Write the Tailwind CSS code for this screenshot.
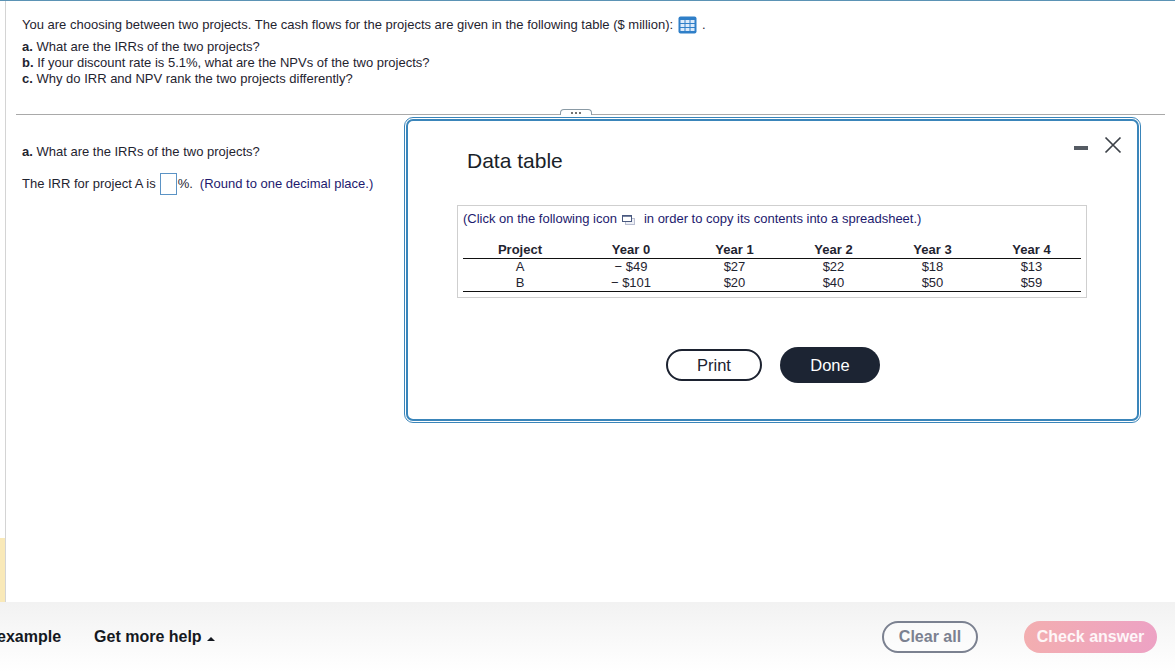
<!DOCTYPE html>
<html lang="en">
<head>
  <meta charset="utf-8" />
  <title>Data table</title>
  <script src="https://cdn.jsdelivr.net/npm/@tailwindcss/browser@4"></script>
</head>
<body class="bg-white">
  <div class="relative flex flex-col w-[1175px] h-[672px] overflow-hidden font-['Liberation_Sans',Arial,sans-serif] text-[13px] text-[#1f2430]">
    <!-- question area -->
    <main class="flex h-[602px] border-t border-t-[#5b93b5]">
      <div class="flex flex-col justify-end w-[6px] h-full border-r border-[#d4d4d4]">
        <div class="h-[64px] bg-[#f9e9b8]"></div>
      </div>
      <div class="flex-1 pl-[10px] pr-[10px]">
        <div class="pl-[6px] pt-[14px] h-[114px] border-b border-[#a9a9a9] relative">
          <p class="flex items-center h-[20px] leading-[20px]">
            You are choosing between two projects. The cash flows for the projects are given in the following table ($ million):
            <svg class="ml-[5px] mr-[5px]" width="19" height="18" viewBox="0 0 19 18">
              <rect x="0.5" y="0.5" width="18" height="17" rx="2" fill="#2f7fc8" />
              <g fill="#dbeafa">
                <rect x="2.5" y="4" width="4" height="3" /><rect x="7.5" y="4" width="4" height="3" /><rect x="12.5" y="4" width="4" height="3" />
                <rect x="2.5" y="8" width="4" height="3" /><rect x="7.5" y="8" width="4" height="3" /><rect x="12.5" y="8" width="4" height="3" />
                <rect x="2.5" y="12" width="4" height="3" /><rect x="7.5" y="12" width="4" height="3" /><rect x="12.5" y="12" width="4" height="3" />
              </g>
            </svg>
            .
          </p>
          <div class="mt-[4px] leading-[16px]">
            <p><b>a.</b> What are the IRRs of the two projects?</p>
            <p><b>b.</b> If your discount rate is 5.1%, what are the NPVs of the two projects?</p>
            <p><b>c.</b> Why do IRR and NPV rank the two projects differently?</p>
          </div>
          <div class="absolute left-[544px] bottom-[-1px] flex justify-center gap-[2px] items-center w-[32px] h-[6px] rounded-t-[4px] border border-b-0 border-[#8a9aa5] bg-white">
            <span class="w-[2px] h-[2px] rounded-full bg-[#444]"></span>
            <span class="w-[2px] h-[2px] rounded-full bg-[#444]"></span>
            <span class="w-[2px] h-[2px] rounded-full bg-[#444]"></span>
          </div>
        </div>
        <div class="pl-[6px] pt-[28px]">
          <p class="leading-[18px]"><b>a.</b> What are the IRRs of the two projects?</p>
          <p class="flex items-center mt-[12px] h-[22px]">
            The IRR for project A is
            <span class="inline-block w-[17px] h-[22px] ml-[4px] mr-[1px] border border-[#5b93c5]"></span>
            %.
            <span class="ml-[7px] text-[#1d1a6e]">(Round to one decimal place.)</span>
          </p>
        </div>
      </div>
    </main>

    <!-- bottom bar -->
    <footer class="flex items-center h-[70px] bg-gradient-to-b from-[#f2f2f2] to-white text-[16px] font-bold text-[#14181f]">
      <span class="ml-[-3px]">example</span>
      <span class="flex items-center ml-[33px]">
        Get more help
        <span class="ml-[5px] mt-[3px] w-0 h-0 border-x-[4px] border-x-transparent border-b-[4px] border-b-[#14181f]"></span>
      </span>
      <button class="ml-auto w-[96px] h-[32px] rounded-full border-2 border-[#7b8190] text-[#7b8190] bg-white/40">Clear all</button>
      <button class="ml-[46px] mr-[18px] w-[133px] h-[32px] rounded-full bg-gradient-to-r from-[#f3aeb0] to-[#eda2c4] text-white/90">Check answer</button>
    </footer>

    <!-- floating data table window -->
    <div class="absolute left-[404px] top-[117px] w-[737px] h-[306px] rounded-[9px] border border-[#3a85ba] p-[1px] bg-white">
      <div class="relative h-full rounded-[7px] border-[2px] border-[#3a85ba] bg-white">
        <div class="absolute right-[15px] top-[15px] flex items-center gap-[16px]">
          <span class="mt-[6px] w-[14px] h-[4px] bg-[#555b63]"></span>
          <svg width="18" height="18" viewBox="0 0 18 18" fill="none" stroke="#3c4148" stroke-width="1.7">
            <path d="M1.5 1.5 L16.5 16.5 M16.5 1.5 L1.5 16.5" />
          </svg>
        </div>
        <div class="pl-[59px] pt-[27px]">
          <h2 class="text-[21px] leading-[26px] text-[#1a1f29]">Data table</h2>
          <div class="mt-[31px] ml-[-10px] w-[630px] h-[93px] border border-[#cfcfcf] pl-[5px] pr-[5px] pt-[4px]">
            <p class="flex items-center h-[18px] text-[#1d1a6e]">
              (Click on the following icon
              <svg class="ml-[5px] mr-[9px]" width="13" height="11" viewBox="0 0 13 11" fill="none">
                <rect x="3.5" y="4.5" width="9" height="6" fill="#eef0f6" stroke="#b8bdd0" />
                <rect x="0.5" y="1.5" width="9" height="6" fill="#fff" stroke="#4a5a80" />
                <path d="M1 2h8" stroke="#4a5a80" stroke-width="1.5" />
              </svg>
              in order to copy its contents into a spreadsheet.)
            </p>
            <table class="mt-[14px] w-[618px] table-fixed text-center text-[13px] leading-[16px] text-[#1f2430] border-b border-[#111]">
              <thead>
                <tr class="border-b border-[#111] font-bold">
                  <th class="w-[114px]">Project</th>
                  <th class="w-[108px]">Year 0</th>
                  <th class="w-[99px]">Year 1</th>
                  <th class="w-[99px]">Year 2</th>
                  <th class="w-[99px]">Year 3</th>
                  <th class="w-[99px]">Year 4</th>
                </tr>
              </thead>
              <tbody>
                <tr><td>A</td><td>− $49</td><td>$27</td><td>$22</td><td>$18</td><td>$13</td></tr>
                <tr><td>B</td><td>− $101</td><td>$20</td><td>$40</td><td>$50</td><td>$59</td></tr>
              </tbody>
            </table>
          </div>
        </div>
        <div class="absolute left-[258px] top-[226px] flex items-center gap-[18px] text-[16.5px]">
          <button class="w-[96px] h-[32px] rounded-full border-2 border-[#1c2230] text-[#1c2230] bg-white">Print</button>
          <button class="w-[100px] h-[36px] rounded-full bg-[#1c2433] text-white">Done</button>
        </div>
      </div>
    </div>
  </div>
</body>
</html>
